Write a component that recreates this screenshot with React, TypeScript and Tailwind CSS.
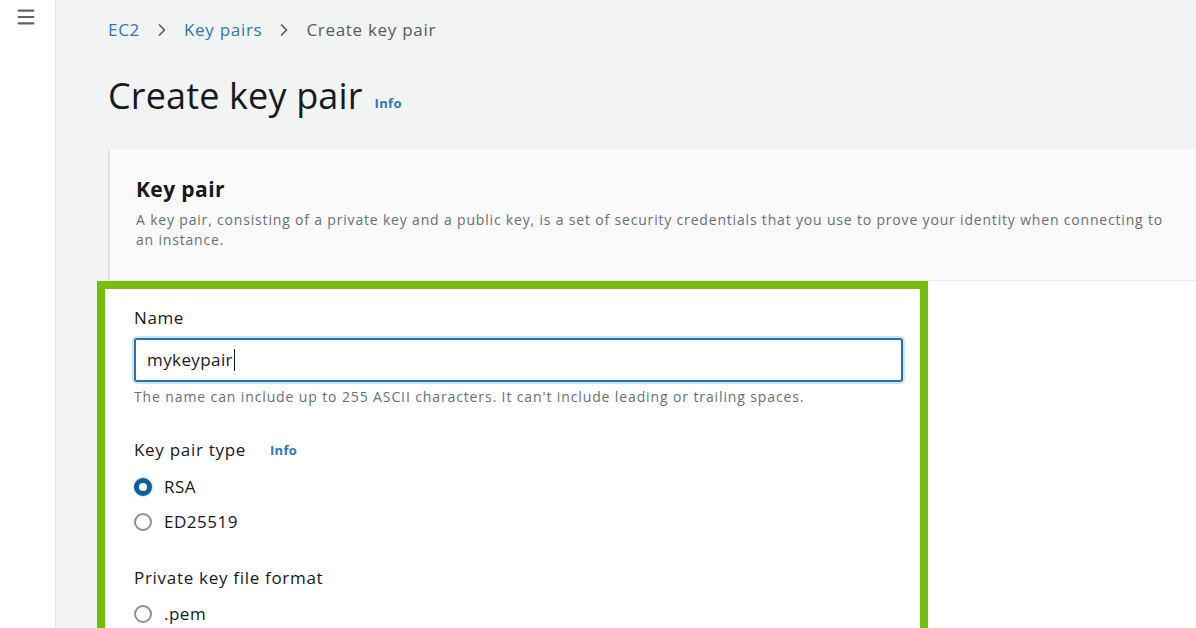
import { Menu, ChevronRight } from 'lucide-react'

function Radio({ checked, label }: { checked?: boolean; label: string }) {
  return (
    <label className="flex items-center gap-[12px] h-[35px] text-[17px] tracking-[0.5px] text-[#16191f]">
      {checked ? (
        <span className="w-[18px] h-[18px] rounded-full border-[5px] border-[#0b5f96] bg-white shrink-0 shadow-[0_0_0_1px_#c5e3f5]" />
      ) : (
        <span className="w-[18px] h-[18px] rounded-full border-2 border-[#8d9196] bg-white shrink-0" />
      )}
      <span>{label}</span>
    </label>
  )
}

function Info() {
  return <span className="text-[13px] font-bold text-[#2b78b8] tracking-[0.3px]">Info</span>
}

export default function App() {
  return (
    <div
      className="w-[1196px] h-[628px] overflow-hidden flex bg-[#f2f3f3]"
      style={{ fontFamily: '"Open Sans", "Noto Sans", sans-serif' }}
    >
      {/* Side nav */}
      <aside className="w-[56px] shrink-0 bg-white border-r border-[#e3e5e6] flex justify-center pt-[6px] pr-[4px]">
        <Menu size={22} strokeWidth={2.4} className="text-[#5f6368]" />
      </aside>

      <main className="flex-1 pl-[52px] pt-[16px]">
        {/* Breadcrumbs */}
        <nav className="flex items-center gap-[12px] text-[17px] tracking-[0.7px] h-[28px]">
          <span className="text-[#2b78b8]">EC2</span>
          <ChevronRight size={20} strokeWidth={2} className="text-[#545b64]" />
          <span className="text-[#2b78b8]">Key pairs</span>
          <ChevronRight size={20} strokeWidth={2} className="text-[#545b64]" />
          <span className="text-[#545b64]">Create key pair</span>
        </nav>

        {/* Heading */}
        <div className="flex items-end gap-[12px] mt-[28px] h-[48px]">
          <h1 className="text-[36px] leading-[48px] text-[#16191f] tracking-[0.15px]">Create key pair</h1>
          <span className="mb-[6px]"><Info /></span>
        </div>

        {/* Card header */}
        <section className="mt-[30px] bg-[#fafafa] border-l-2 border-[#e1e3e4]">
          <div className="pl-[26px] pr-[24px] pt-[24px] h-[131px] border-b border-[#eaeded]">
            <h2 className="text-[21px] font-bold text-[#16191f] leading-[30px] tracking-[0.4px]">Key pair</h2>
            <p className="mt-[6px] max-w-[1040px] text-[14px] leading-[20px] text-[#687078] tracking-[0.82px]">
              A key pair, consisting of a private key and a public key, is a set of security credentials that you use to prove your identity when connecting to an instance.
            </p>
          </div>
        </section>

        {/* Highlighted form */}
        <div className="bg-white -ml-[11px] h-[400px] flex">
          <div className="w-[831px] border-[8px] border-[#75bd10] pl-[29px] pr-[17px] pt-[17px] bg-white">
            <div className="text-[17px] text-[#16191f] leading-[24px] tracking-[0.6px]">Name</div>
            <div className="mt-[8px] h-[44px] rounded-[3px] border-2 border-[#2f6ea6] shadow-[0_0_0_2px_#c5e8f7] flex items-center pl-[11px] text-[17px] tracking-[0.4px] text-[#16191f]">
              mykeypair<span className="ml-[1px] w-[1px] h-[22px] bg-[#16191f]" />
            </div>
            <p className="mt-[5px] text-[14px] leading-[20px] text-[#687078] tracking-[0.88px]">
              The name can include up to 255 ASCII characters. It can't include leading or trailing spaces.
            </p>

            <div className="mt-[31px] flex items-center gap-[24px] text-[17px] text-[#16191f] leading-[24px] tracking-[0.7px]">
              <span>Key pair type</span>
              <Info />
            </div>
            <div className="mt-[7px] flex flex-col">
              <Radio checked label="RSA" />
              <Radio label="ED25519" />
            </div>

            <div className="mt-[27px] text-[17px] text-[#16191f] leading-[24px] tracking-[0.7px]">Private key file format</div>
            <div className="mt-[6px] flex flex-col">
              <Radio label=".pem" />
            </div>
          </div>
          <div className="flex-1 bg-white" />
        </div>
      </main>
    </div>
  )
}
